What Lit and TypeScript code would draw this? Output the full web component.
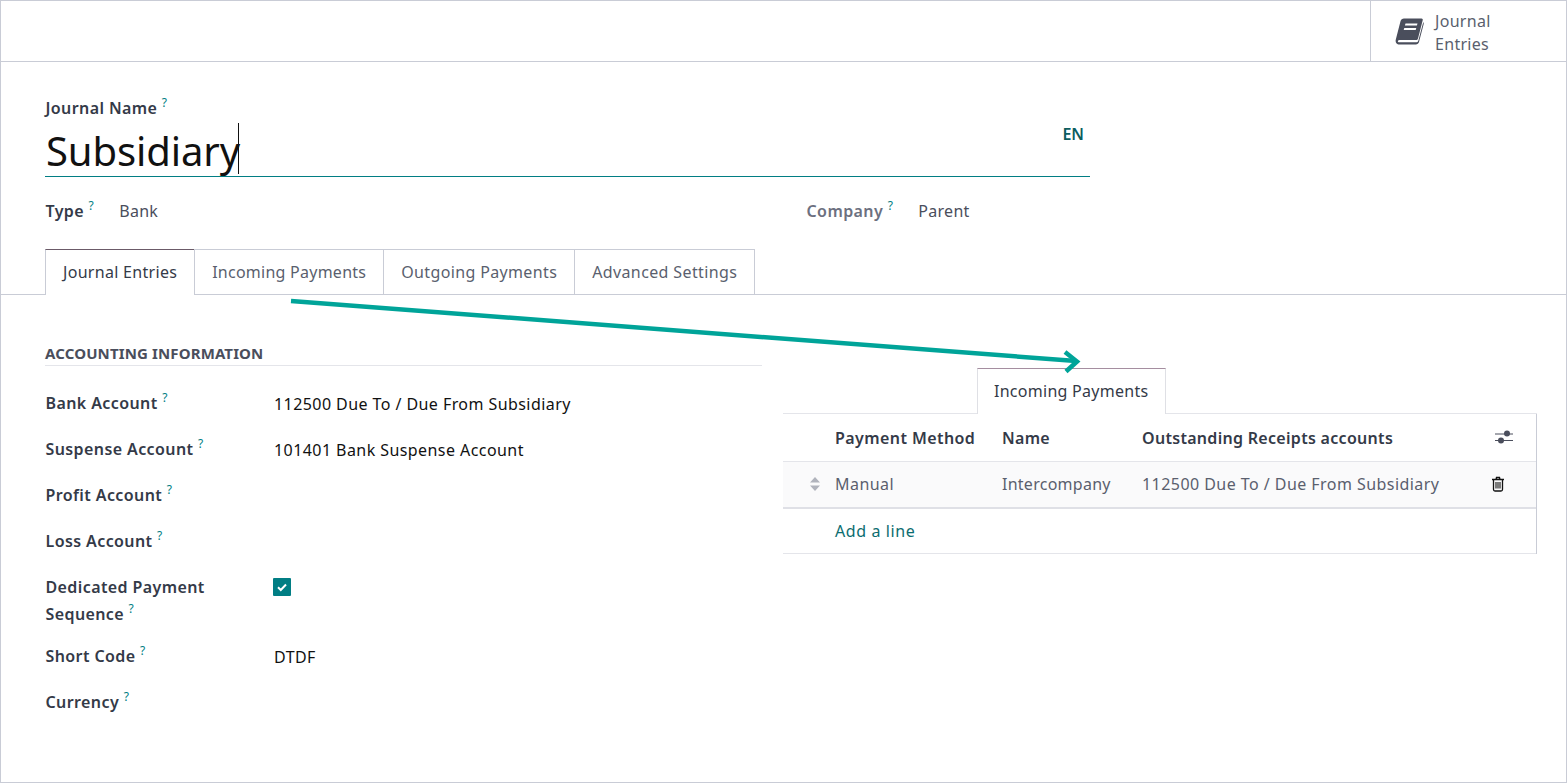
import { LitElement, html, css } from "lit";
import { customElement } from "lit/decorators.js";

const Q = html`<sup class="q">?</sup>`;

@customElement("app-root")
export class AppRoot extends LitElement {
  static styles = css`
    :host { display: block; position: relative; box-sizing: border-box; width: 1567px; height: 783px; border: 1px solid #c9ccd6; background: #fff; overflow: hidden; font-family: "Noto Sans", sans-serif; font-size: 16px; color: #4a4e5c; letter-spacing: .3px; }
    * { box-sizing: border-box; }
    .top { height: 61px; display: flex; justify-content: flex-end; border-bottom: 1px solid #c9ccd6; }
    .stat { width: 196px; border-left: 1px solid #c9ccd6; display: flex; align-items: center; padding-left: 24px; gap: 11px; line-height: 23px; color: #5a5f6e; }
    .stat svg { width: 29px; height: 28px; flex: none; }
    .stat span { margin-top: 4px; }
    .head { padding: 35px 476px 0 44px; height: 187px; }
    .lab { font-weight: 600; color: #343a48; white-space: nowrap; letter-spacing: .4px; padding-left: .5px; }
    .q { font-size: 12px; font-weight: 400; color: #017e84; vertical-align: 7px; line-height: 0; margin-left: 0; }
    .name-row { display: flex; align-items: flex-end; justify-content: space-between; height: 56px; border-bottom: 1px solid #017e84; margin-top: 2px; padding-right: 6px; }
    .name { position: relative; font-size: 40px; line-height: 50px; color: #111; letter-spacing: -.1px; margin-bottom: 0; padding-left: 1px; }
    .caret { position: absolute; left: 100%; top: -3px; width: 1px; height: 51px; background: #111; margin-left: -2px; }
    .en { font-weight: 600; color: #0c5d5f; align-self: flex-start; margin-top: 2px; letter-spacing: 0; }
    .meta { display: grid; grid-template-columns: 761px 1fr; margin-top: 23px; }
    .mrow { display: flex; gap: 25px; }
    .mrow.dim .lab { color: #6c7080; }
    .tabs { display: flex; height: 46px; padding-left: 44px; border-bottom: 1px solid #c9ccd6; }
    .tab { padding: 0 17px; line-height: 44px; border: 1px solid #c9ccd6; border-bottom: none; height: 45px; margin-left: -1px; color: #5a5f6e; white-space: nowrap; }
    .tab:first-child { margin-left: 0; }
    .tab.on { height: 46px; background: #fff; border-top-color: #6b5a68; color: #343a48; }
    .tab.inc { letter-spacing: .25px; }
    .tab.out { letter-spacing: .36px; }
    .tab.adv { letter-spacing: .38px; }
    .body { display: grid; grid-template-columns: 717px 754px; column-gap: 21px; padding-left: 44px; }
    .sec { margin-top: 46px; font-size: 15px; font-weight: 700; color: #4a4e5c; height: 25px; line-height: 24px; border-bottom: 1px solid #e4e5ea; letter-spacing: .13px; }
    .rows { display: grid; grid-template-columns: 229px 1fr; margin-top: 15px; }
    .rows > div { min-height: 46px; line-height: 27px; padding-top: 10px; color: #111; letter-spacing: .43px; }
    .rows > .lab { padding-top: 9px; color: #343a48; white-space: normal; letter-spacing: .4px; }
    .rows > .tall { min-height: 69px; }
    .check { display: block; width: 18px; height: 18px; background: #017e84; border-radius: 1px; margin: 3px 0 0 -1px; }
    .inset { margin-top: 73px; }
    .itabs { display: flex; height: 46px; padding-left: 194px; border-bottom: 1px solid #e4e5ea; }
    .itab { height: 46px; padding: 0 17px 0 16px; line-height: 44px; border: 1px solid #dfe0e5; border-top-color: #a58ea0; border-bottom: none; background: #fff; color: #343a48; white-space: nowrap; letter-spacing: .27px; }
    .table { border-right: 1px solid #c9ccd6; }
    .tr { display: grid; grid-template-columns: 52px 167px 140px 1fr 48px; align-items: center; }
    .thead { height: 48px; border-bottom: 1px solid #e4e5ea; font-weight: 600; color: #343a48; }
    .thead span { white-space: nowrap; }
    .thead .wide { letter-spacing: .42px; }
    .tbody { height: 47px; padding-bottom: 2px; background: #fafafb; border-bottom: 2px solid #dfe0e6; color: #5a5f6e; }
    .add { height: 45px; border-bottom: 1px solid #e4e5ea; padding-left: 52px; line-height: 44px; color: #0c6d70; letter-spacing: .6px; }
    .ic { display: block; }
    .ic-grip { margin-left: 26px; }
    .ic-sliders { margin-left: 6px; margin-top: -2px; }
    .ic-trash { margin-left: 3px; }
    .val { letter-spacing: .45px; }
    .val.co { letter-spacing: .26px; }
    .arrow { position: absolute; left: 285px; top: 295px; width: 810px; height: 85px; pointer-events: none; }
  `;

  render() {
    return html`
      <div class="top">
        <div class="stat">
          <svg viewBox="0 0 29 28" aria-hidden="true">
            <path fill="#4a4e5c" d="M9 1.500h17.500c1 0 1.500.8 1.200 1.800L23 21.500c-.3 1-1 1.500-2 1.500H4.500c-1.600 0-2.200 1.600-1 2.300H21c1 0 2-.6 2.300-1.600l5-18.700c.4.600.6 1.200.4 2L24 25c-.4 1.400-1.600 2.500-3.200 2.500H4.500C2 27.500 0 25.600 .8 22.500L5.500 4.200C6 2.500 7.300 1.500 9 1.500z"/>
            <path fill="#fff" d="M10.500 6.500h12l-.6 2h-12zM9.300 11h12l-.6 2h-12z"/>
          </svg>
          <span>Journal<br />Entries</span>
        </div>
      </div>
      <div class="head">
        <span class="lab">Journal Name ${Q}</span>
        <div class="name-row">
          <span class="name">Subsidiary<span class="caret"></span></span>
          <span class="en">EN</span>
        </div>
        <div class="meta">
          <div class="mrow"><span class="lab">Type ${Q}</span><span>Bank</span></div>
          <div class="mrow dim"><span class="lab">Company ${Q}</span><span>Parent</span></div>
        </div>
      </div>
      <div class="tabs">
        <div class="tab on">Journal Entries</div>
        <div class="tab inc">Incoming Payments</div>
        <div class="tab out">Outgoing Payments</div>
        <div class="tab adv">Advanced Settings</div>
      </div>
      <div class="body">
        <div>
          <div class="sec">ACCOUNTING INFORMATION</div>
          <div class="rows">
            <div class="lab">Bank Account ${Q}</div><div>112500 Due To / Due From Subsidiary</div>
            <div class="lab">Suspense Account ${Q}</div><div>101401 Bank Suspense Account</div>
            <div class="lab">Profit Account ${Q}</div><div></div>
            <div class="lab">Loss Account ${Q}</div><div></div>
            <div class="lab tall">Dedicated Payment<br />Sequence ${Q}</div>
            <div class="tall"><svg class="check" viewBox="0 0 18 18" aria-hidden="true"><path d="M5 9.200l2.800 2.800L13 6.500" fill="none" stroke="#fff" stroke-width="2"/></svg></div>
            <div class="lab">Short Code ${Q}</div><div>DTDF</div>
            <div class="lab">Currency ${Q}</div><div></div>
          </div>
        </div>
        <div class="inset">
          <div class="itabs"><div class="itab">Incoming Payments</div></div>
          <div class="table">
            <div class="tr thead">
              <span></span><span class="wide">Payment Method</span><span>Name</span><span>Outstanding Receipts accounts</span>
              <svg class="ic ic-sliders" width="20" height="18" viewBox="0 0 20 18" aria-hidden="true"><path d="M1 6h18M1 12.500h18" stroke="#4a4e5c"/><circle cx="13" cy="5.500" r="3" fill="#4a4e5c"/><circle cx="7" cy="12.500" r="3" fill="#4a4e5c"/></svg>
            </div>
            <div class="tr tbody">
              <svg class="ic ic-grip" width="12" height="16" viewBox="0 0 12 16" aria-hidden="true"><path d="M6 1l5 5.500H1zM6 15L1 9.500h10z" fill="#b0b3bc"/></svg>
              <span class="val">Manual</span><span class="val co">Intercompany</span><span class="val">112500 Due To / Due From Subsidiary</span>
              <svg class="ic ic-trash" width="14" height="16" viewBox="0 0 14 16" aria-hidden="true"><path d="M1 3.500h12M2.500 4v9.500c0 .8.600 1.500 1.500 1.500h6c.9 0 1.500-.7 1.500-1.500V4M5 3.500L5.500 1.500h3L9 3.500" fill="none" stroke="#111" stroke-width="1.300"/><path d="M5 6v6.500M7 6v6.500M9 6v6.500" stroke="#111" stroke-width="1.100"/></svg>
            </div>
            <div class="add">Add a line</div>
          </div>
        </div>
      </div>
      <svg class="arrow" viewBox="0 0 810 85" aria-hidden="true">
        <path d="M5 5L790 65" stroke="#00a499" stroke-width="4.500" fill="none"/>
        <path d="M779 56l12 9.500-11 10" stroke="#00a499" stroke-width="4.500" fill="none"/>
      </svg>
    `;
  }
}
